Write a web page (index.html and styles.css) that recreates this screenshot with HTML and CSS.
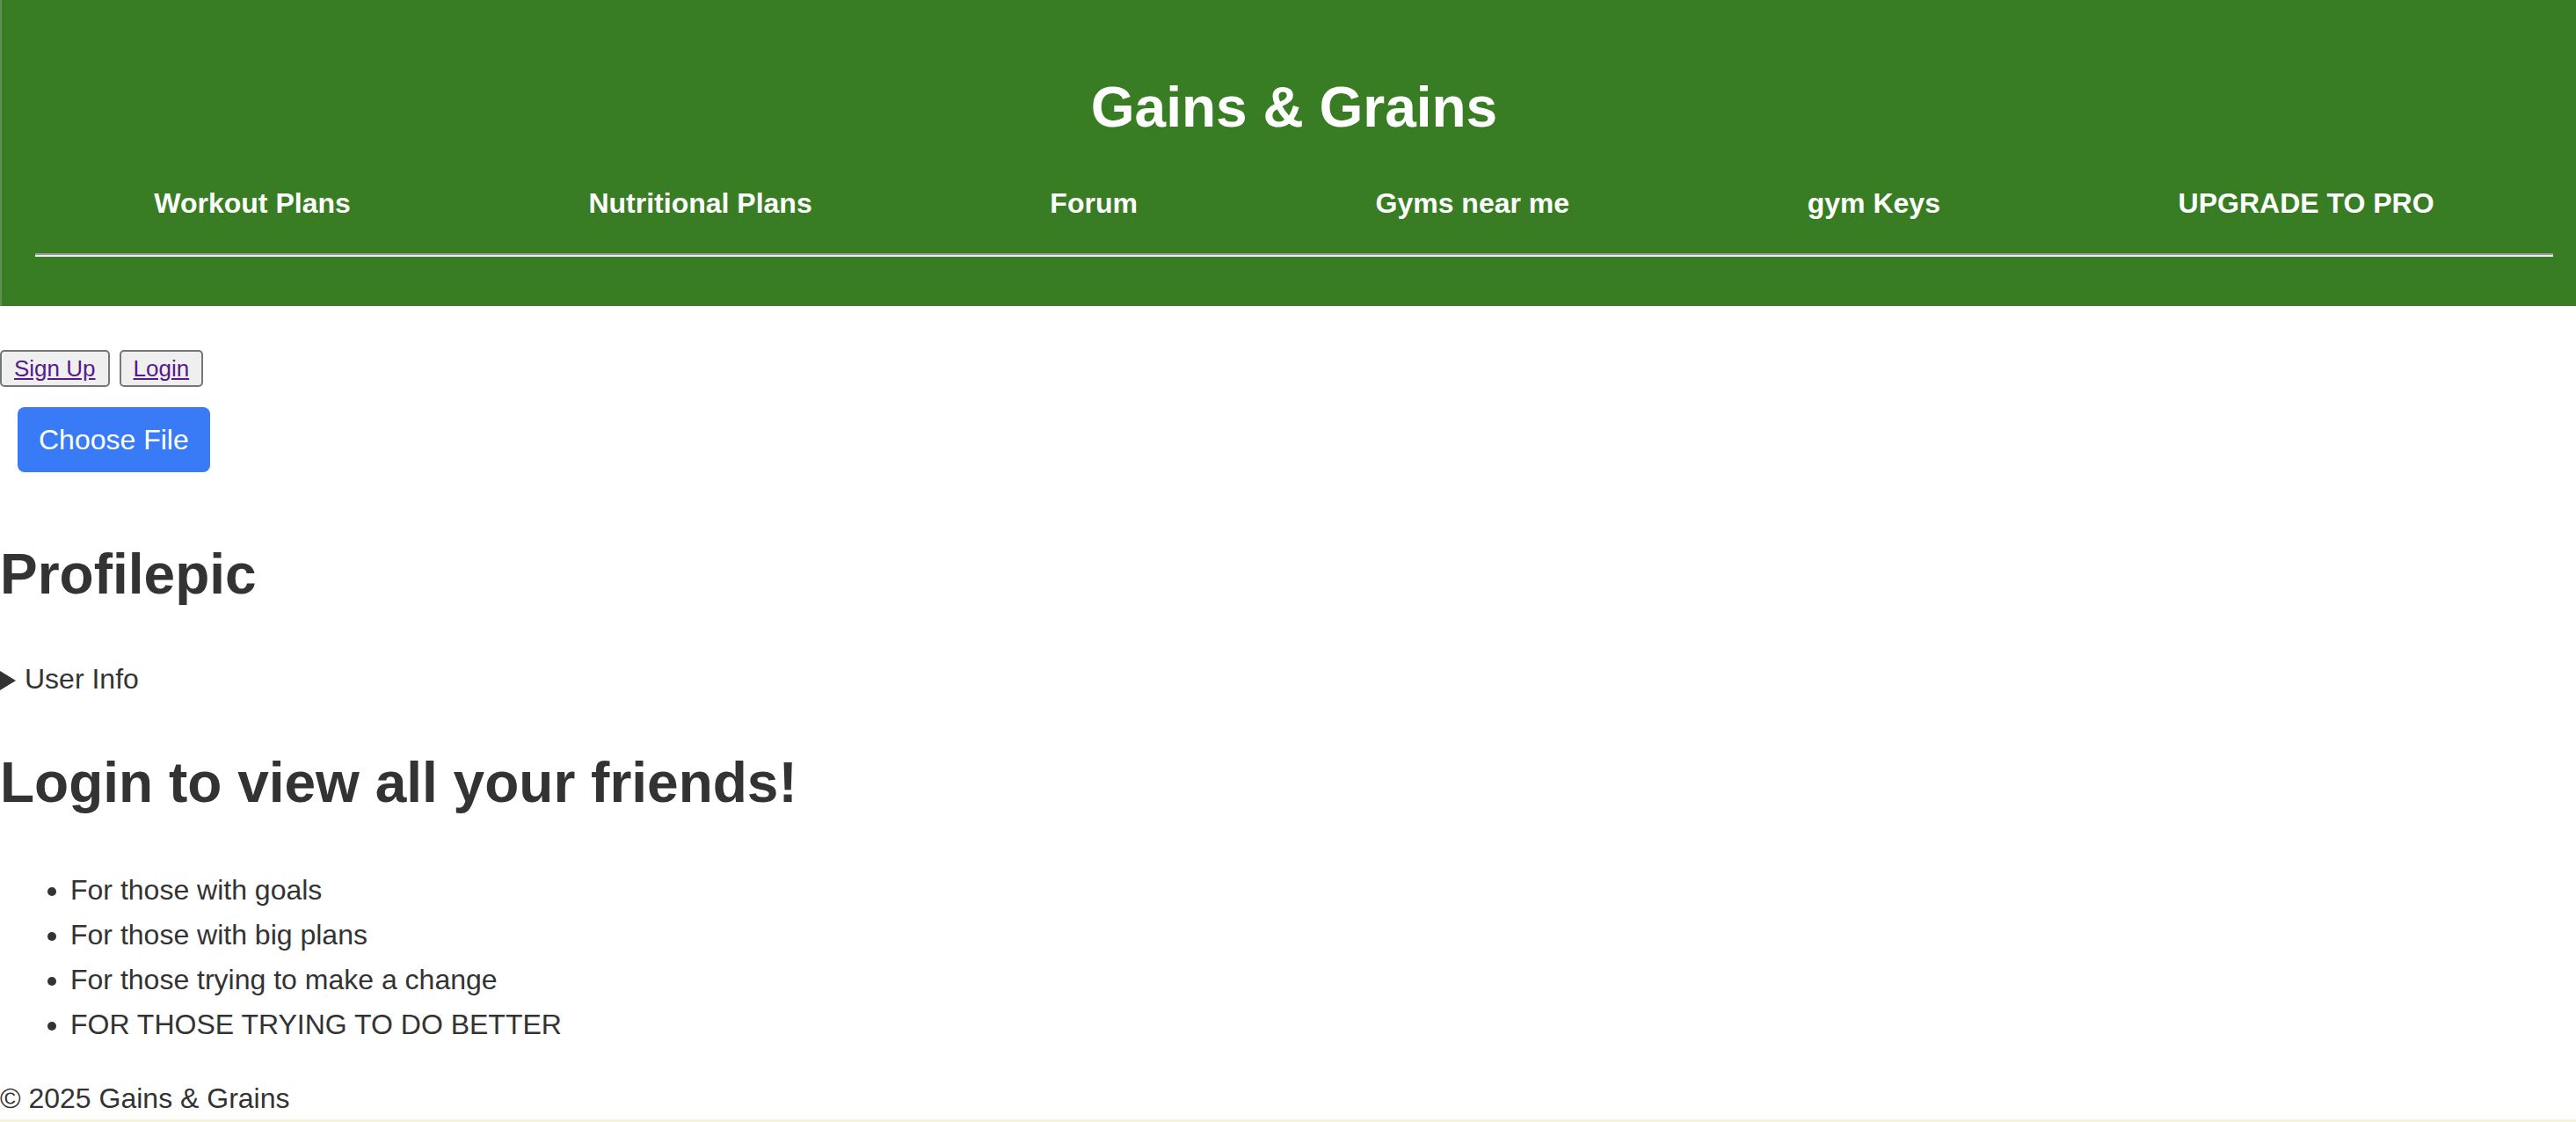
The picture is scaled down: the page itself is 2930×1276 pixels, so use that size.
FILE: index.html
```html
<!DOCTYPE html>
<html lang="en">
<head>
<meta charset="utf-8">
<title>Gains &amp; Grains</title>
<link rel="stylesheet" href="styles.css">
</head>
<body>
<header class="site-header">
  <h1 class="site-title">Gains &amp; Grains</h1>
  <nav class="main-nav">
    <a href="#">Workout Plans</a>
    <a href="#">Nutritional Plans</a>
    <a href="#">Forum</a>
    <a href="#">Gyms near me</a>
    <a href="#">gym Keys</a>
    <a href="#">UPGRADE TO PRO</a>
  </nav>
  <hr class="nav-rule">
</header>
<main class="content">
  <div class="auth-row">
    <button class="auth-btn" type="button"><a href="#">Sign Up</a></button>
    <button class="auth-btn" type="button"><a href="#">Login</a></button>
  </div>
  <div class="upload-row">
    <label class="file-btn">Choose File</label>
  </div>
  <h1 class="page-heading first">Profilepic</h1>
  <details class="user-info">
    <summary class="user-summary">User Info</summary>
  </details>
  <h1 class="page-heading second">Login to view all your friends!</h1>
  <ul class="goals">
    <li>For those with goals</li>
    <li>For those with big plans</li>
    <li>For those trying to make a change</li>
    <li>FOR THOSE TRYING TO DO BETTER</li>
  </ul>
  <footer class="site-footer">© 2025 Gains &amp; Grains</footer>
</main>
</body>
</html>
```
FILE: styles.css
```css
html {
  background: #f5f4dc;
}
body {
  margin: 0;
  background: #ffffff;
  font-family: "Liberation Sans", Arial, Helvetica, sans-serif;
  font-size: 32px;
  color: #333333;
  padding-bottom: 5px;
}
.site-header {
  background: #387d23;
  border-left: 2px solid #5e8e50;
  padding: 85px 26px 56px 38px;
}
.site-title {
  margin: 0;
  text-align: center;
  color: #ffffff;
  font-size: 64px;
  line-height: 74px;
  font-weight: bold;
}
.main-nav {
  margin-top: 53px;
  display: flex;
  justify-content: space-around;
}
.main-nav a {
  color: #ffffff;
  text-decoration: none;
  font-weight: bold;
  font-size: 32px;
  line-height: 38px;
}
.nav-rule {
  margin: 38px 0 0 0;
  height: 0;
  border: none;
  border-top: 2px solid #9c9c9c;
  border-bottom: 2px solid #ececec;
}
.content {
  display: flex;
  flex-direction: column;
  align-items: flex-start;
}
.auth-row {
  margin-top: 50px;
  display: flex;
  gap: 11px;
}
.auth-btn {
  margin: 0;
  padding: 0 14px;
  height: 42px;
  background: #efefef;
  border: 2px solid #767676;
  border-radius: 5px;
  font-family: "Liberation Sans", Arial, sans-serif;
  font-size: 26px;
  line-height: 38px;
}
.auth-btn a {
  color: #551a8b;
  text-decoration: underline;
}
.upload-row {
  margin-top: 23px;
  padding-left: 20px;
}
.file-btn {
  display: block;
  background: #397bf6;
  color: #ffffff;
  font-size: 32px;
  line-height: 38px;
  padding: 18px 24px;
  border-radius: 8px;
}
.page-heading {
  margin: 0;
  font-size: 64px;
  line-height: 74px;
  font-weight: bold;
  color: #333333;
}
.page-heading.first {
  margin-top: 79px;
}
.user-info {
  margin-top: 63px;
}
.user-summary {
  list-style: none;
  display: flex;
  align-items: center;
  gap: 10px;
  line-height: 38px;
  cursor: pointer;
}
.user-summary::-webkit-details-marker {
  display: none;
}
.user-summary::before {
  content: "";
  width: 0;
  height: 0;
  border-top: 11px solid transparent;
  border-bottom: 11px solid transparent;
  border-left: 18px solid #333333;
  margin-top: 4px;
}
.page-heading.second {
  margin-top: 62px;
}
.goals {
  margin: 60px 0 0 0;
  padding-left: 80px;
}
.goals li {
  line-height: 51px;
}
.site-footer {
  margin-top: 39px;
  line-height: 38px;
}
```
